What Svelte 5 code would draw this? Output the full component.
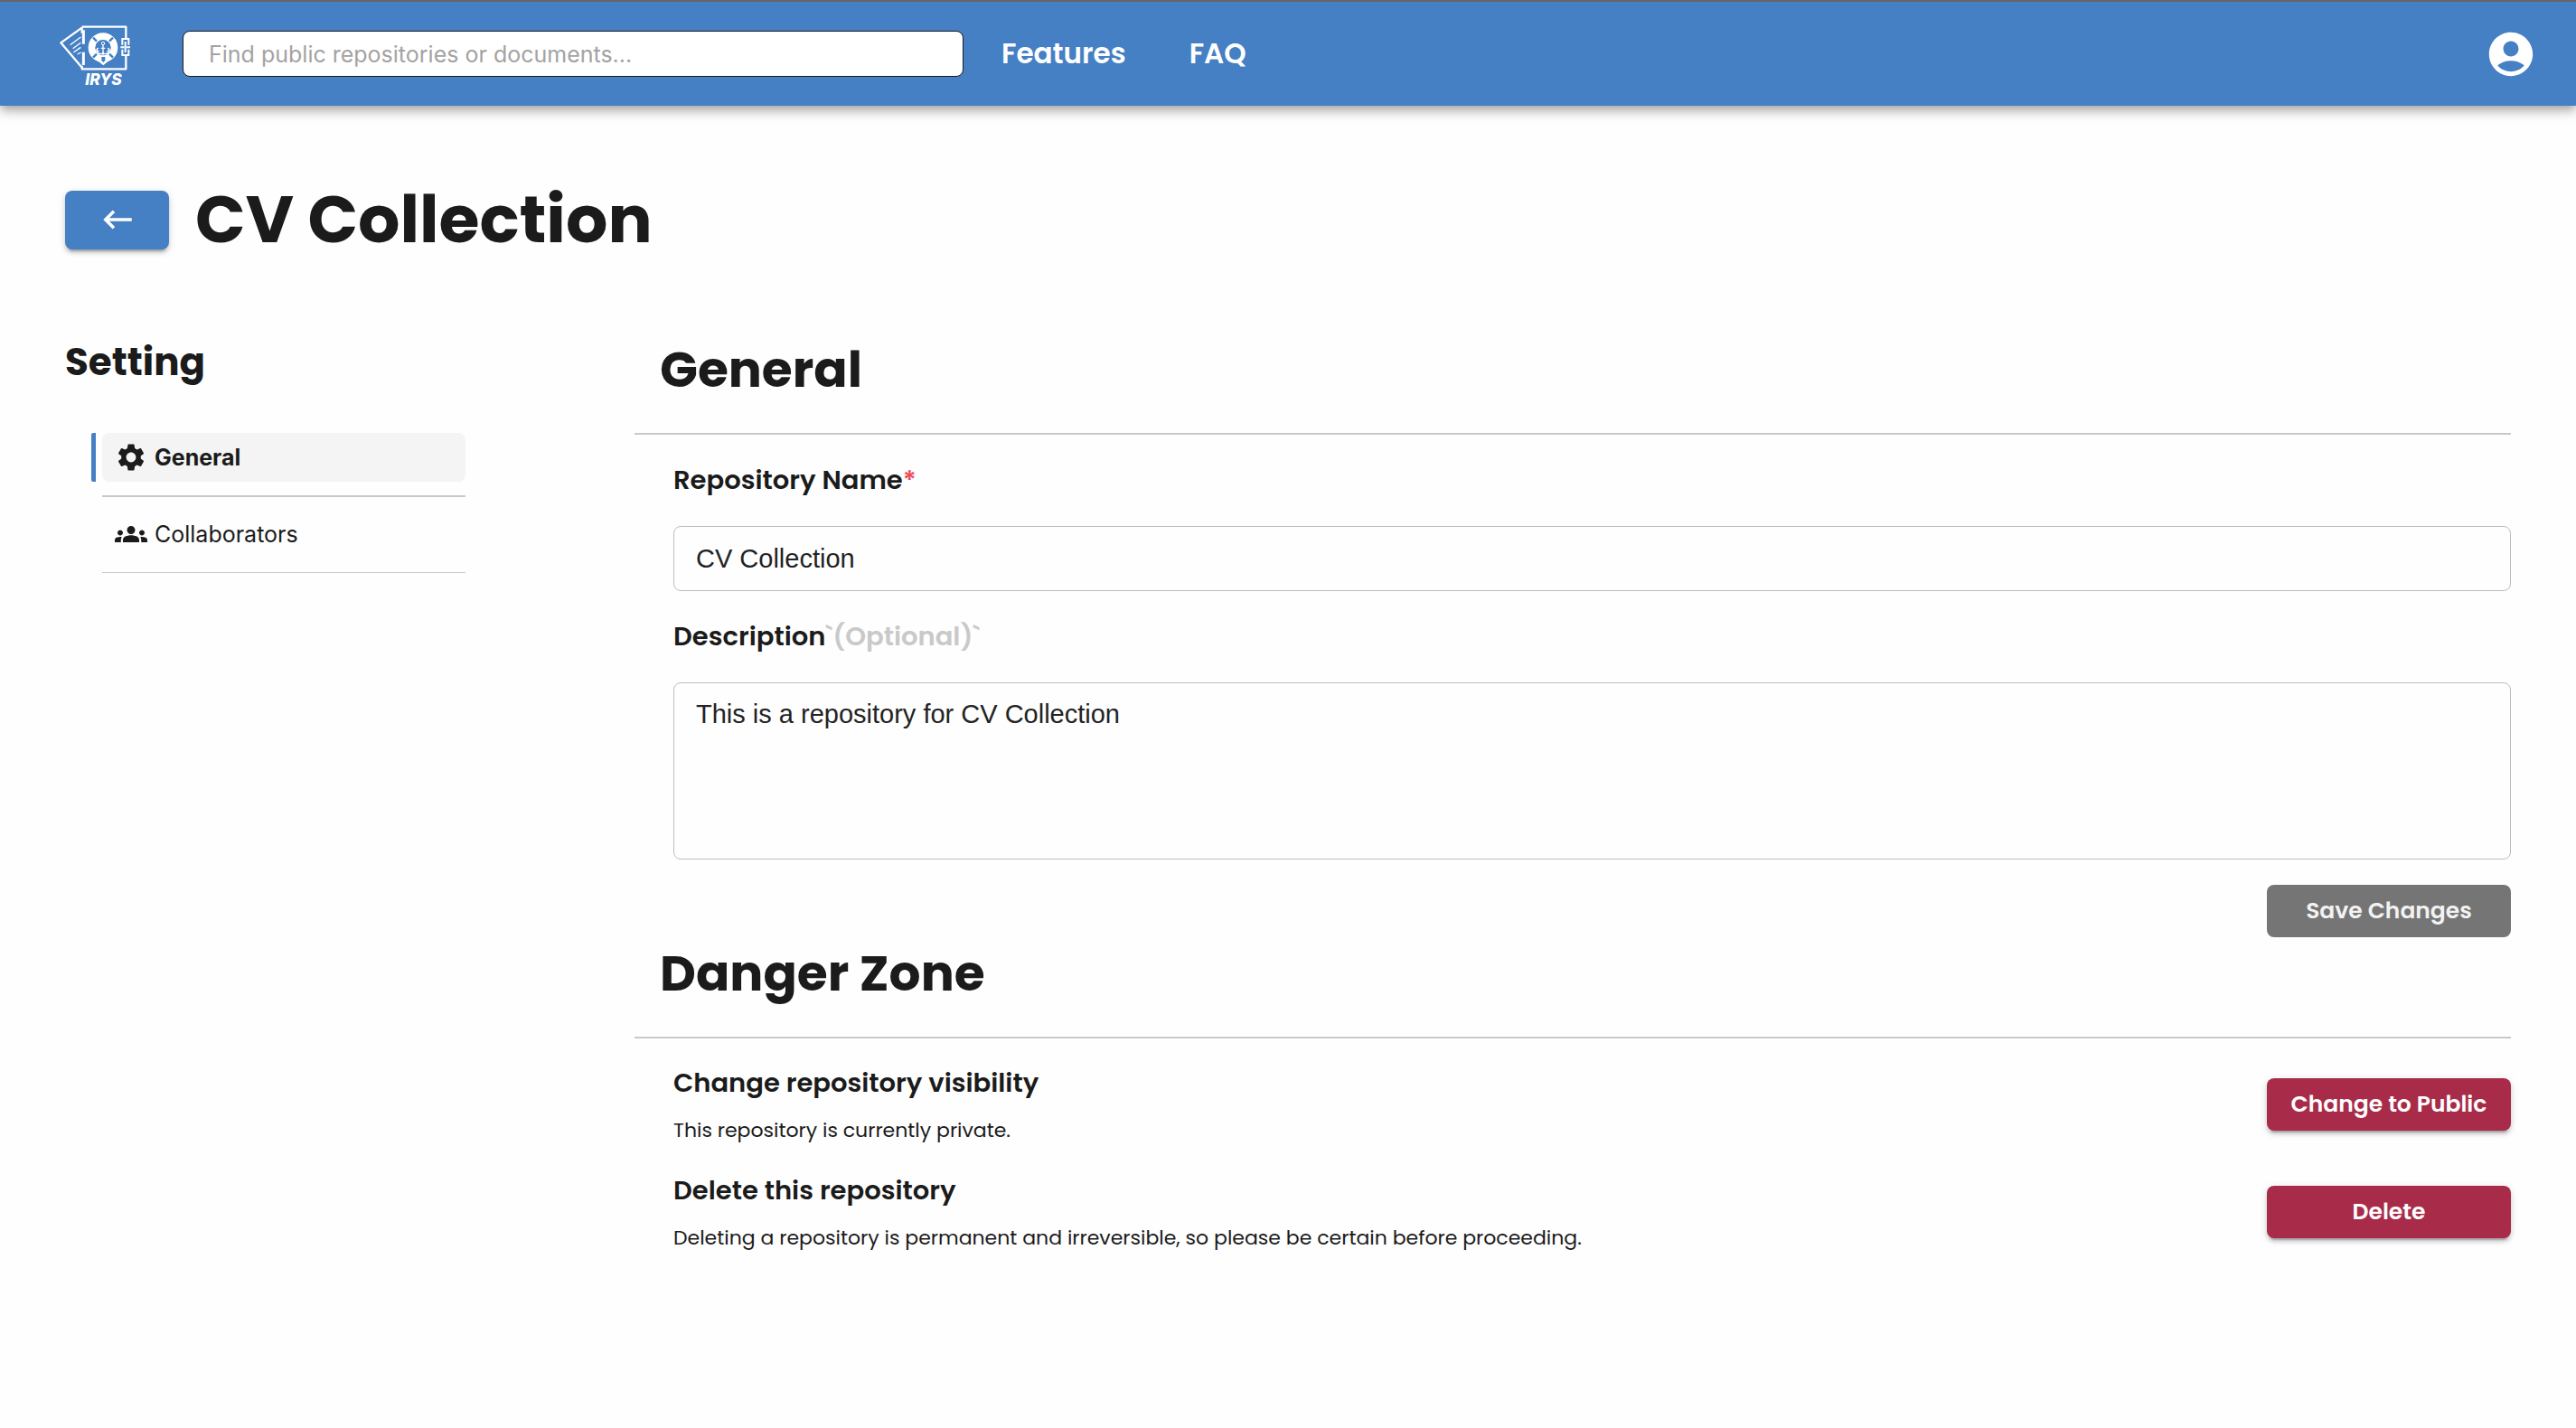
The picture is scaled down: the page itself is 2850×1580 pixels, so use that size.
<script>
  let search = $state('');
  let name = $state('CV Collection');
  let description = $state('This is a repository for CV Collection');

  const navLinks = ['Features', 'FAQ'];

  const sections = [
    {
      label: 'General',
      active: true,
      icon: 'M19.14 12.94c.04-.3.06-.61.06-.94 0-.32-.02-.64-.07-.94l2.03-1.58c.18-.14.23-.41.12-.61l-1.92-3.32c-.12-.22-.37-.29-.59-.22l-2.39.96c-.5-.38-1.03-.7-1.62-.94l-.36-2.54c-.04-.24-.24-.41-.48-.41h-3.84c-.24 0-.43.17-.47.41l-.36 2.54c-.59.24-1.13.57-1.62.94l-2.39-.96c-.22-.08-.47 0-.59.22L2.74 8.87c-.12.21-.08.47.12.61l2.03 1.58c-.05.3-.09.63-.09.94s.02.64.07.94l-2.03 1.58c-.18.14-.23.41-.12.61l1.92 3.32c.12.22.37.29.59.22l2.39-.96c.5.38 1.03.7 1.62.94l.36 2.54c.05.24.24.41.48.41h3.84c.24 0 .44-.17.47-.41l.36-2.54c.59-.24 1.13-.56 1.62-.94l2.39.96c.22.08.47 0 .59-.22l1.92-3.32c.12-.22.07-.47-.12-.61l-2.01-1.58zM12 15.6c-1.98 0-3.6-1.62-3.6-3.6s1.62-3.6 3.6-3.6 3.6 1.62 3.6 3.6-1.62 3.6-3.6 3.6z'
    },
    {
      label: 'Collaborators',
      active: false,
      icon: 'M12 12.75c1.63 0 3.07.39 4.24.9 1.08.48 1.76 1.56 1.76 2.73V18H6v-1.61c0-1.18.68-2.26 1.76-2.73 1.17-.52 2.61-.91 4.24-.91zM4 13c1.1 0 2-.9 2-2s-.9-2-2-2-2 .9-2 2 .9 2 2 2zm1.13 1.1c-.37-.06-.74-.1-1.13-.1-.99 0-1.93.21-2.78.58C.48 14.9 0 15.62 0 16.43V18h4.5v-1.61c0-.83.23-1.61.63-2.29zM20 13c1.1 0 2-.9 2-2s-.9-2-2-2-2 .9-2 2 .9 2 2 2zm4 3.43c0-.81-.48-1.53-1.22-1.85-.85-.37-1.79-.58-2.78-.58-.39 0-.76.04-1.13.1.4.68.63 1.46.63 2.29V18H24v-1.57zM12 6c1.66 0 3 1.34 3 3s-1.34 3-3 3-3-1.34-3-3 1.34-3 3-3z'
    }
  ];

  const dangerActions = [
    {
      title: 'Change repository visibility',
      text: 'This repository is currently private.',
      button: 'Change to Public'
    },
    {
      title: 'Delete this repository',
      text: 'Deleting a repository is permanent and irreversible, so please be certain before proceeding.',
      button: 'Delete'
    }
  ];
</script>

<header class="topbar">
  <a class="logo" href="#home" aria-label="IRYS home">
    <svg viewBox="48 72 237 216" width="79" height="72" fill="none" stroke="#fff">
      <path d="M122 89H268V126M268 186V229H122V218M122 89V110M122 92L52 142L122 224" stroke-width="7" stroke-linejoin="round" />
      <path d="M127 100V146M127 173V216" stroke-width="9" />
      <path d="M83 149L118 123M92 161L118 142M94 174L118 157M107 180L119 174" stroke-width="4" />
      <path d="M256 149V129H277V149M256 164V183H277V164M266 138V174M250 157H262M270 157H282" stroke-width="6" />
      <circle cx="192" cy="158" r="37" stroke-width="24" />
      <path d="M159 125L171 137M225 125L213 137M159 191L171 179M225 191L213 179" stroke="#457fc4" stroke-width="7" />
      <circle cx="192" cy="158" r="26" fill="#457fc4" stroke="none" />
      <circle cx="192" cy="144" r="5" stroke-width="3" />
      <path d="M192 149V184M185 160H199" stroke-width="4" />
      <path d="M171 164C169 179 188 182 192 175C196 182 215 179 213 164M177 160C169 160 171 171 179 170M207 160C215 160 213 171 205 170" stroke-width="4" />
      <path d="M177 184L192 190L207 184L209 203L193 217L176 203Z" fill="#fff" stroke="none" />
      <path d="M187 189H199V201L193 207L187 201Z" fill="#457fc4" stroke="none" />
      <text x="133" y="281" class="logo-text">IRYS</text>
    </svg>
  </a>
  <input
    class="search"
    type="search"
    aria-label="Search"
    placeholder="Find public repositories or documents..."
    bind:value={search}
  />
  <nav class="links" aria-label="Main">
    {#each navLinks as link}
      <a href="#{link.toLowerCase()}">{link}</a>
    {/each}
  </nav>
  <button class="account" aria-label="Account">
    <svg viewBox="0 0 24 24" width="58" height="58" fill="currentColor">
      <path d="M12 2C6.48 2 2 6.48 2 12s4.48 10 10 10 10-4.48 10-10S17.52 2 12 2zm0 4c1.93 0 3.5 1.57 3.5 3.5S13.93 13 12 13s-3.5-1.57-3.5-3.5S10.07 6 12 6zm0 14c-2.03 0-4.43-.82-6.14-2.88C7.55 15.8 9.68 15 12 15s4.45.8 6.14 2.12C16.43 19.18 14.03 20 12 20z" />
    </svg>
  </button>
</header>

<main class="page">
  <div class="title-row">
    <button class="back" aria-label="Back">
      <svg viewBox="0 0 24 24" width="42" height="42" fill="currentColor">
        <path d="M21 11H6.83l3.58-3.59L9 6l-6 6 6 6 1.41-1.41L6.83 13H21z" />
      </svg>
    </button>
    <h1>CV Collection</h1>
  </div>

  <div class="columns">
    <aside class="sidebar">
      <h2 class="side-title">Setting</h2>
      <ul class="side-list">
        {#each sections as section}
          <li class:active={section.active}>
            <a href="#{section.label.toLowerCase()}" aria-current={section.active ? 'page' : undefined}>
              <svg viewBox="0 0 24 24" width="36" height="36" fill="currentColor" aria-hidden="true">
                <path d={section.icon} />
              </svg>
              <span>{section.label}</span>
            </a>
          </li>
        {/each}
      </ul>
    </aside>

    <div class="content">
      <section>
        <h2 class="section-title">General</h2>
        <form class="body" onsubmit={(event) => event.preventDefault()}>
          <label for="repo-name">Repository Name<span class="required">*</span></label>
          <input id="repo-name" class="field" type="text" bind:value={name} />
          <label for="repo-description">Description<span class="optional">`(Optional)`</span></label>
          <textarea id="repo-description" class="field area" bind:value={description}></textarea>
          <button class="action save" disabled>Save Changes</button>
        </form>
      </section>

      <section>
        <h2 class="section-title">Danger Zone</h2>
        <div class="body danger">
          {#each dangerActions as action}
            <div class="danger-row">
              <div>
                <h3>{action.title}</h3>
                <p>{action.text}</p>
              </div>
              <button class="action">{action.button}</button>
            </div>
          {/each}
        </div>
      </section>
    </div>
  </div>
</main>

<style>
  :global(body) {
    background: #fefefe;
    color: #1b1b1b;
    font-family: Poppins, Inter, sans-serif;
  }

  :global(*) {
    box-sizing: border-box;
  }

  h1,
  h2,
  h3,
  p,
  ul {
    margin: 0;
    padding: 0;
  }

  a {
    color: inherit;
    text-decoration: none;
  }

  button {
    border: 0;
    padding: 0;
    color: #fff;
    font-family: inherit;
    cursor: pointer;
  }

  svg {
    display: block;
    flex: none;
    overflow: visible;
  }

  .topbar {
    display: flex;
    align-items: center;
    height: 117px;
    padding: 0 43px 0 66px;
    border-top: 2px solid #666;
    background: #457fc4;
    color: #fff;
    box-shadow:
      0 4px 8px -2px rgba(0, 0, 0, 0.2),
      0 8px 10px rgba(0, 0, 0, 0.14),
      0 2px 20px rgba(0, 0, 0, 0.12);
  }

  .logo-text {
    fill: #fff;
    stroke: none;
    font: italic 800 52px Inter, sans-serif;
  }

  .search {
    width: 864px;
    height: 51px;
    margin: 0 42px 0 57px;
    padding: 0 28px;
    border: 1px solid #1b1b1b;
    border-radius: 8px;
    background: #fff;
    color: #1b1b1b;
    font: 400 25px Inter, sans-serif;
  }

  .search::placeholder {
    color: #a3a3a3;
    opacity: 1;
  }

  .links {
    display: flex;
    gap: 70px;
    padding-bottom: 2px;
    font-size: 31px;
    font-weight: 600;
    line-height: 40px;
  }

  .account {
    margin-left: auto;
    background: none;
  }

  .page {
    padding: 80px 72px;
  }

  .title-row {
    display: flex;
    align-items: center;
    gap: 29px;
    height: 92px;
  }

  .back {
    display: grid;
    place-items: center;
    width: 115px;
    height: 65px;
    border-radius: 8px;
    background: #457fc4;
  }

  .back,
  .action {
    box-shadow:
      0 6px 2px -4px rgba(0, 0, 0, 0.2),
      0 4px 4px rgba(0, 0, 0, 0.14),
      0 2px 10px rgba(0, 0, 0, 0.12);
  }

  h1 {
    font-size: 73px;
    font-weight: 700;
    line-height: 92px;
  }

  .columns {
    display: grid;
    grid-template-columns: 443px 1fr;
    gap: 187px;
    padding-top: 80px;
  }

  .side-title {
    font-size: 42px;
    font-weight: 700;
    line-height: 64px;
  }

  .side-list {
    padding: 46px 0 0 29px;
    list-style: none;
  }

  .side-list li {
    display: flex;
    gap: 7px;
  }

  .side-list li::before {
    content: '';
    width: 5px;
    border-radius: 2px 0 0 2px;
  }

  .side-list li a {
    position: relative;
    display: flex;
    flex: 1;
    align-items: center;
    gap: 8px;
    height: 54px;
    margin-bottom: 31px;
    padding-left: 14px;
    border-radius: 8px;
    font: 400 25px Inter, sans-serif;
  }

  .side-list li a::after {
    content: '';
    position: absolute;
    inset: auto 0 -16px;
    height: 1px;
    background: #c9c9c9;
  }

  .side-list li.active::before {
    height: 54px;
    background: #457fc4;
  }

  .side-list li.active a {
    background: #f4f4f4;
    font-weight: 700;
  }

  .side-list li.active a::after {
    bottom: -17px;
    height: 2px;
  }

  .section-title {
    padding: 0 28px 30px;
    border-bottom: 2px solid #c9c9c9;
    font-size: 55px;
    font-weight: 700;
    line-height: 80px;
  }

  .body {
    display: flex;
    flex-direction: column;
    padding: 28px 0 0 43px;
  }

  label {
    font-size: 29px;
    font-weight: 600;
    line-height: 44px;
  }

  .required {
    color: #f04b59;
  }

  .optional {
    color: #c9c9c9;
  }

  .field {
    width: 100%;
    height: 72px;
    margin: 29px 0 28px;
    padding: 0 24px;
    border: 1px solid #bdbdbd;
    border-radius: 8px;
    background: transparent;
    color: #232323;
    font: 400 29px / 34px 'Liberation Sans', sans-serif;
  }

  .area {
    display: block;
    height: 196px;
    padding: 17px 24px;
    resize: none;
  }

  .action {
    flex: none;
    width: 270px;
    height: 58px;
    border-radius: 8px;
    background: #a82c49;
    font-size: 25px;
    font-weight: 600;
  }

  .save {
    align-self: flex-end;
    background: #757575;
    color: #f2f2f2;
    box-shadow: none;
    cursor: default;
  }

  .danger {
    gap: 27px;
    padding-top: 27px;
  }

  .danger-row {
    display: flex;
    align-items: center;
    justify-content: space-between;
  }

  h3 {
    font-size: 29px;
    font-weight: 600;
    line-height: 44px;
  }

  p {
    padding-top: 14px;
    font-size: 22px;
    line-height: 34px;
  }
</style>
